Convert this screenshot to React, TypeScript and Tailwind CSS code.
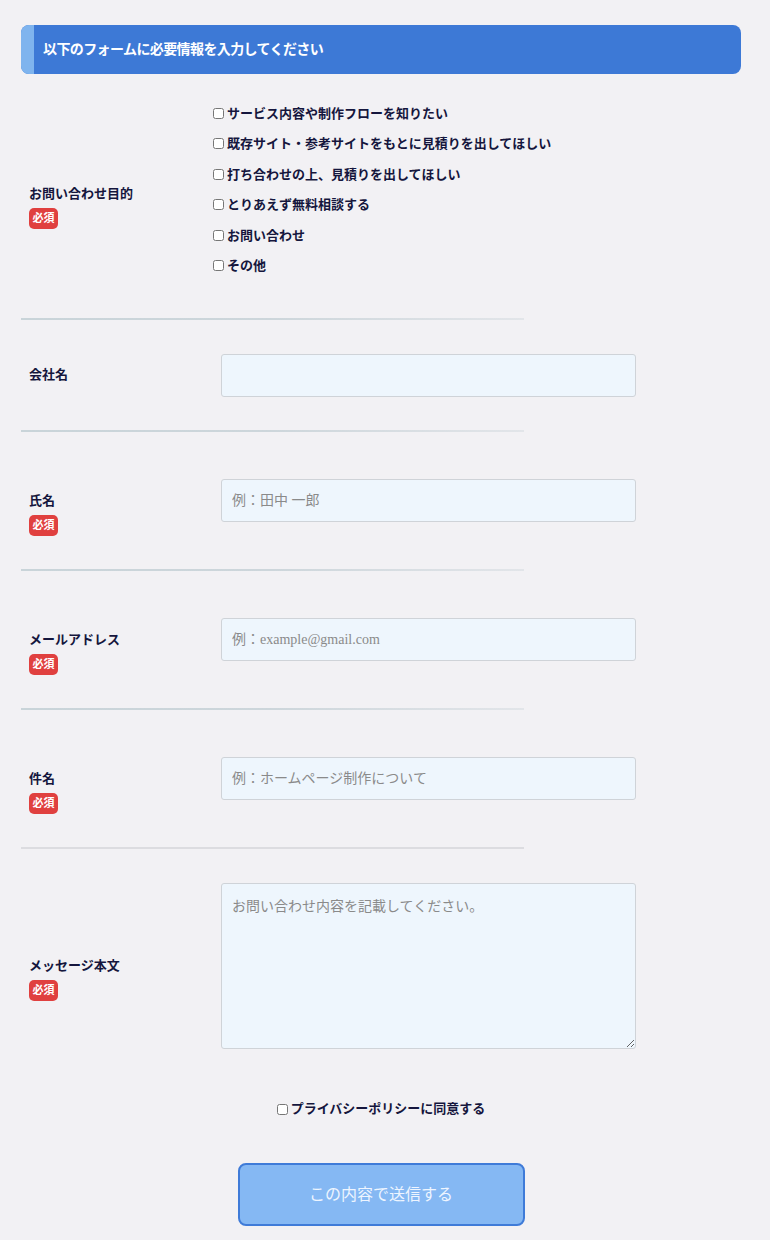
import React from 'react';

const purposes = [
  'サービス内容や制作フローを知りたい',
  '既存サイト・参考サイトをもとに見積りを出してほしい',
  '打ち合わせの上、見積りを出してほしい',
  'とりあえず無料相談する',
  'お問い合わせ',
  'その他',
];

function Badge() {
  return (
    <span className="mt-[4px] inline-flex h-[21px] w-[29px] items-center justify-center rounded-[5px] bg-[#e0403f] text-[11px] font-bold leading-none text-white">
      必須
    </span>
  );
}

function Label({ text, required }: { text: string; required?: boolean }) {
  return (
    <div className={`flex w-[200px] shrink-0 flex-col items-start pl-2 ${required ? 'pt-[25px]' : ''}`}>
      <span className="text-[13px] font-bold leading-[20px] text-[#15163d]">{text}</span>
      {required && <Badge />}
    </div>
  );
}

function Divider({ plain }: { plain?: boolean }) {
  return (
    <div
      className={
        plain
          ? 'h-[2px] w-[503px] bg-[#dcdce0]'
          : 'h-[2px] w-[503px] bg-gradient-to-r from-[#c9d4d9] via-[#cdd6db] to-[#e2e5e9]'
      }
    />
  );
}

const inputCls =
  'h-[43px] w-[415px] rounded-[3px] border border-[#cfd3d8] bg-[#eef6fd] px-[10px] text-[14px] text-[#333] placeholder:text-[#8a8a8a] outline-none';

function Row({
  label,
  required,
  children,
}: {
  label: string;
  required?: boolean;
  children: React.ReactNode;
}) {
  return (
    <div className="flex items-center py-[33.5px]">
      <Label text={label} required={required} />
      {children}
    </div>
  );
}

export default function App() {
  return (
    <div
      className="min-h-[1240px] bg-[#f2f1f4] pt-[25px] pb-[14px]"
      style={{ fontFamily: '"Liberation Serif", "Noto Sans CJK JP", serif' }}
    >
      <div className="mx-[21px] w-[720px]">
        {/* Header */}
        <div className="flex h-[49px] overflow-hidden rounded-[8px] bg-[#3d79d6]">
          <div className="w-[13px] bg-[#7fb4ee]" />
          <div className="flex items-center pl-[9px] text-[14px] font-bold tracking-[-0.6px] text-white">
            以下のフォームに必要情報を入力してください
          </div>
        </div>

        {/* Purpose */}
        <div className="flex items-center pt-[24px] pb-[21px]">
          <div className="mb-[8px]">
            <Label text="お問い合わせ目的" required />
          </div>
          <div className="-ml-[8px] flex flex-col pb-[16px]">
            {purposes.map((p) => (
              <label key={p} className="flex h-[30.5px] items-center gap-[3px]">
                <input type="checkbox" className="m-0 h-[11px] w-[11px]" />
                <span className="text-[13px] font-bold text-[#15163d]">{p}</span>
              </label>
            ))}
          </div>
        </div>
        <Divider />

        <Row label="会社名">
          <input className={inputCls} />
        </Row>
        <Divider />

        <Row label="氏名" required>
          <input className={inputCls} placeholder="例：田中 一郎" />
        </Row>
        <Divider />

        <Row label="メールアドレス" required>
          <input className={inputCls} placeholder="例：example@gmail.com" />
        </Row>
        <Divider />

        <Row label="件名" required>
          <input className={inputCls} placeholder="例：ホームページ制作について" />
        </Row>
        <Divider plain />

        <Row label="メッセージ本文" required>
          <textarea
            className="h-[166px] w-[415px] rounded-[3px] border border-[#cfd3d8] bg-[#eef6fd] px-[10px] py-[12px] text-[14px] text-[#333] placeholder:text-[#8a8a8a] outline-none"
            placeholder="お問い合わせ内容を記載してください。"
          />
        </Row>

        {/* Privacy */}
        <div className="mt-[17px] flex justify-center">
          <label className="flex h-[20px] items-center gap-[3px]">
            <input type="checkbox" className="m-0 h-[11px] w-[11px]" />
            <span className="text-[13px] font-bold text-[#15163d]">プライバシーポリシーに同意する</span>
          </label>
        </div>

        {/* Submit */}
        <div className="mt-[44px] flex justify-center">
          <button className="h-[63px] w-[287px] rounded-[8px] border-2 border-[#3f7bd8] bg-[#85b8f3] text-[16px] text-[#eef5ff]">
            この内容で送信する
          </button>
        </div>
      </div>
    </div>
  );
}
